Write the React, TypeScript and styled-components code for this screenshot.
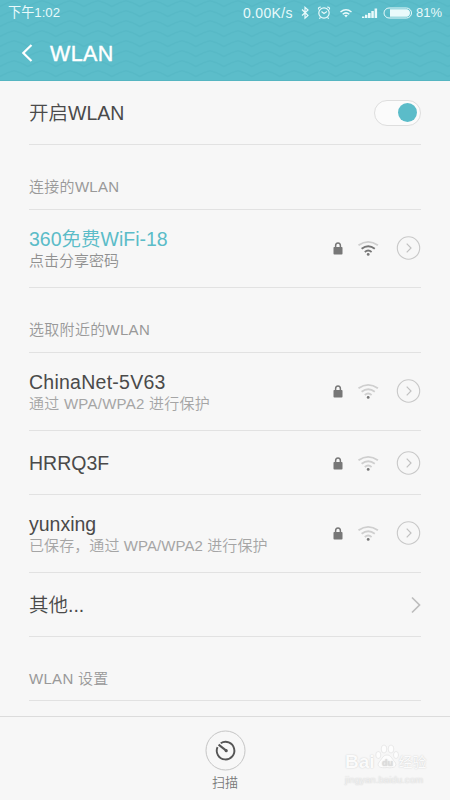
import React from "react";
import styled, { createGlobalStyle } from "styled-components";

const Global = createGlobalStyle`
  * { box-sizing: border-box; }
  body { margin: 0; background: #f7f7f7; font-family: "Liberation Sans", "Noto Sans CJK SC", sans-serif; font-weight: 350; }
`;
const Screen = styled.div`
  width: 450px; height: 800px; display: flex; flex-direction: column; overflow: hidden; background: #f7f7f7;
`;
const Header = styled.header`
  position: relative; height: 81px; flex: none; color: #fff; background: #5cbdca; border-bottom: 1px solid #55b5c1;
`;
const Waves = styled.svg`position: absolute; inset: 0; width: 450px; height: 80px;`;
const StatusBar = styled.div`
  position: relative; height: 26px; padding: 0 8px; display: flex; align-items: center; justify-content: space-between;
  font-weight: 400; color: #e9fafb;
`;
const StatusText = styled.span<{ $size: number; $spacing?: number }>`
  font-size: ${p => p.$size}px; letter-spacing: ${p => p.$spacing ?? 0}px; line-height: 26px; white-space: nowrap;
`;
const StatusIcons = styled.svg`display: block; width: 118px; height: 26px; margin-left: 1.5px;`;
const StatusRight = styled.div`display: flex; align-items: center;`;
const TitleBar = styled.div`position: relative; height: 54px; padding-left: 21px; display: flex; align-items: center;`;
const Title = styled.h1`
  margin: 2px 0 0 16px; font-size: 21.5px; line-height: 30px; font-weight: 400; letter-spacing: 0.4px;
  -webkit-text-stroke: 0.4px #fff;
`;
const List = styled.main`flex: 1; padding: 0 29px;`;
const Row = styled.div<{ $height: number }>`
  height: ${p => p.$height}px; display: flex; align-items: center; justify-content: space-between;
  border-bottom: 1px solid #e2e2e2;
`;
const SectionLabel = styled(Row)`
  align-items: flex-start; padding-top: 32px; font-size: 15px; line-height: 20px; color: #999; letter-spacing: 0.3px;
`;
const Labels = styled.div`display: flex; flex-direction: column; padding-top: 1px;`;
const Name = styled.span<{ $accent?: boolean; $spacing?: number }>`
  font-size: 19.5px; line-height: 24px; color: ${p => (p.$accent ? "#5bbcc8" : "#4a4a4a")};
  letter-spacing: ${p => p.$spacing ?? 0}px; white-space: nowrap;
`;
const Detail = styled.span<{ $dark?: boolean; $spacing?: number }>`
  font-size: 15px; line-height: 20px; color: ${p => (p.$dark ? "#909090" : "#a5a5a5")};
  letter-spacing: ${p => p.$spacing ?? 0}px; white-space: nowrap;
`;
const Switch = styled.div`
  width: 47px; height: 26px; padding: 3px; border: 1px solid #dedede; border-radius: 13px; background: #fbfbfb;
  display: flex; justify-content: flex-end; align-items: center;
`;
const Knob = styled.div`width: 19px; height: 19px; border-radius: 50%; background: #5bbcc9;`;
const RowIcons = styled.svg<{ $raised?: boolean }>`
  display: block; width: 92px; height: 26px; margin-bottom: ${p => (p.$raised ? 1 : 0)}px;
`;
const Footer = styled.footer`
  position: relative; height: 84px; flex: none; border-top: 1px solid #dcdcdc; display: flex; flex-direction: column; align-items: center;
  padding-top: 14px; font-size: 13px; line-height: 18px; color: #777;
`;
const ScanIcon = styled.svg`display: block; width: 41px; height: 41px; margin: -1px 0 3px;`;
const Watermark = styled.div`
  position: absolute; left: 345px; top: 34px; width: 90px; color: #fbfbfb; text-shadow: 0 0 1.5px #c6c6c6;
`;
const Brand = styled.div`display: flex; align-items: center; font-size: 19px; font-weight: 700; line-height: 20px; height: 22px;`;
const BrandCn = styled.span`font-size: 14px; font-weight: 400;`;
const Url = styled.div`font-size: 9.7px; line-height: 10px; margin-top: 2px; color: #f0f0f0;`;
const Paw = styled.svg`width: 24px; height: 26px; margin-top: -10px;`;

function Signals({ strong, raised }: { strong?: boolean; raised?: boolean }) {
  const arc = strong ? "#777" : "#cfcfcf";
  return (
    <RowIcons $raised={raised} viewBox="0 0 92 26" fill="none">
      <path d="M6.6 14v-3.2a2.4 2.8 0 0 1 4.8 0V14" stroke="#777" strokeWidth="1.5" />
      <rect x="4.5" y="12" width="9" height="7.5" rx=".8" fill="#777" />
      <path d="M29.5 10.3q9.7-6.8 19.4 0" stroke="#cfcfcf" strokeWidth="1.9" />
      <path d="M32.6 13.7q6.6-5 13.2 0" stroke={arc} strokeWidth="1.9" />
      <path d="M35.8 16.9q3.4-2.6 6.8 0" stroke={arc} strokeWidth="1.9" />
      <circle cx="39.2" cy="19.4" r="1.4" fill="#777" />
      <circle cx="79.5" cy="13" r="11.2" stroke="#c8c8c8" strokeWidth="1.1" />
      <path d="M77.7 8.7l4.3 4.3-4.3 4.3" stroke="#c0c0c0" strokeWidth="1.2" />
    </RowIcons>
  );
}

const wave = "M-7 3L0 6.5L7 3L14 .8L21 3L28 6.5L35 3";

export default function App() {
  return (
    <>
      <Global />
      <Screen>
        <Header>
          <Waves>
            <defs>
              <pattern id="waves" width="28" height="10" patternUnits="userSpaceOnUse">
                <path d={wave} fill="none" stroke="#50b3c2" strokeWidth="1.7" opacity=".42" />
              </pattern>
            </defs>
            <rect width="450" height="80" fill="url(#waves)" />
          </Waves>
          <StatusBar>
            <StatusText $size={13.2}>下午1:02</StatusText>
            <StatusRight>
              <StatusText $size={14} $spacing={0.35}>0.00K/s</StatusText>
              <StatusIcons viewBox="0 0 118 26" fill="none" stroke="#e9fafb">
                <path d="M8 9.5l6 6-3 2.7V7.3l3 2.7-6 5.5" strokeWidth="1.2" />
                <circle cx="30" cy="13" r="5.2" strokeWidth="1.2" />
                <path d="M24.5 9.5q-.5-2.5 2.3-2.5M35.5 9.5q.5-2.5-2.3-2.5M27.5 11.5l2.5 2 3-2M26.5 17.5l-1.3 1.2M33.5 17.5l1.3 1.2" strokeWidth="1.1" />
                <path d="M46.5 12q5.5-4.5 11 0M48.7 14.3q3.3-2.8 6.6 0" strokeWidth="1.5" />
                <path d="M50.2 15.2q1.8-1 3.6 0L52 17.5z" fill="#e9fafb" stroke="none" />
                <path d="M68 18v-1.5h2.4V18zM71 18v-3.2h2.4V18zM74 18v-5h2.6V18zM77.300 18v-7h2.500V18zM80.600 18V8.500h2.500V18z" fill="#e9fafb" stroke="none" />
                <rect x="90" y="8" width="27.5" height="10" rx="5" strokeWidth="1" />
                <path d="M96 9.3h17a3.8 3.8 0 0 1 0 7.4H96z" fill="#e9fafb" stroke="none" />
              </StatusIcons>
              <StatusText $size={13}>&nbsp;81%</StatusText>
            </StatusRight>
          </StatusBar>
          <TitleBar>
            <svg width="13" height="20" viewBox="0 0 13 20" fill="none">
              <path d="M10.5 2L2.3 10l8.2 8" stroke="#fff" strokeWidth="2.2" />
            </svg>
            <Title>WLAN</Title>
          </TitleBar>
        </Header>
        <List>
          <Row $height={64}><Name>开启WLAN</Name><Switch><Knob /></Switch></Row>
          <SectionLabel $height={65}>连接的WLAN</SectionLabel>
          <Row $height={78}>
            <Labels><Name $accent>360免费WiFi-18</Name><Detail $dark>点击分享密码</Detail></Labels>
            <Signals strong raised />
          </Row>
          <SectionLabel $height={65}>选取附近的WLAN</SectionLabel>
          <Row $height={78}>
            <Labels><Name $spacing={0.25}>ChinaNet-5V63</Name><Detail $spacing={0.25}>通过 WPA/WPA2 进行保护</Detail></Labels>
            <Signals raised />
          </Row>
          <Row $height={64}><Name>HRRQ3F</Name><Signals /></Row>
          <Row $height={78}>
            <Labels><Name>yunxing</Name><Detail $spacing={0.08}>已保存，通过 WPA/WPA2 进行保护</Detail></Labels>
            <Signals raised />
          </Row>
          <Row $height={64}>
            <Name>其他...</Name>
            <svg width="12" height="18" viewBox="0 0 12 18" fill="none">
              <path d="M3 1.5L10.5 9 3 16.5" stroke="#bdbdbd" strokeWidth="1.7" />
            </svg>
          </Row>
          <SectionLabel $height={64}>WLAN 设置</SectionLabel>
        </List>
        <Footer>
          <ScanIcon viewBox="0 0 41 41" fill="none">
            <circle cx="20.5" cy="20.5" r="19.5" stroke="#c5c5c5" />
            <path d="M15.7 13.3a8.8 8.8 0 1 1-3.2 3.8" stroke="#555" strokeWidth="1.9" />
            <path d="M13.6 14.6l7.6 6" stroke="#555" strokeWidth="2" />
            <circle cx="21.2" cy="20.7" r="1.6" fill="#555" />
          </ScanIcon>
          扫描
          <Watermark>
            <Brand>
              Bai
              <Paw viewBox="0 0 24 26" fill="#fdfdfd" stroke="#dedede" strokeWidth=".6">
                <ellipse cx="9" cy="5" rx="2.8" ry="4" /><ellipse cx="16" cy="5" rx="2.8" ry="4" />
                <ellipse cx="3.3" cy="11" rx="2.5" ry="3.5" /><ellipse cx="21" cy="11" rx="2.5" ry="3.5" />
                <path d="M12 11c4 0 5 4 7.5 6.5 4 5-1 7-7.5 6-6.5 1-11.5-1-7.5-6C7 15 8 11 12 11z" />
                <text x="7" y="22" fontSize="9" fill="#ddd" stroke="none">du</text>
              </Paw>
              <BrandCn>经验</BrandCn>
            </Brand>
            <Url>jingyan.baidu.com</Url>
          </Watermark>
        </Footer>
      </Screen>
    </>
  );
}
